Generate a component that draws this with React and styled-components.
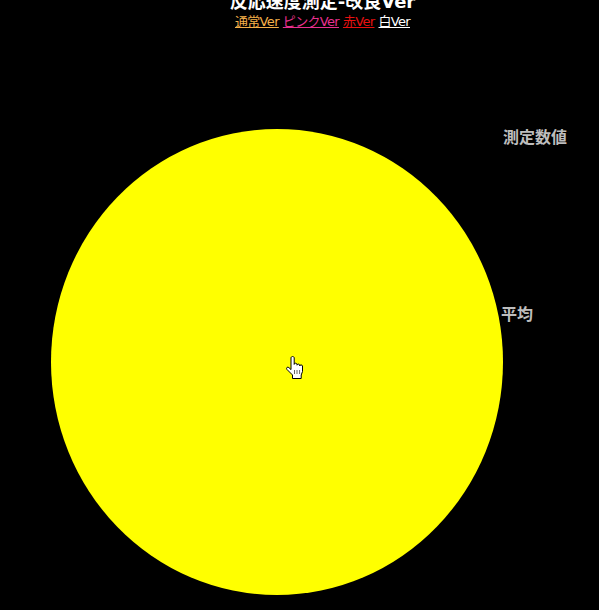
import React from "react";
import styled, { createGlobalStyle } from "styled-components";

const Global = createGlobalStyle`
  html, body { margin: 0; padding: 0; background: #000; overflow: hidden; height: 610px; }
  body { font-family: "Noto Sans CJK JP", "DejaVu Sans", sans-serif; }
`;
const Page = styled.div`
  width: 599px;
  height: 610px;
  overflow: hidden;
  display: flex;
  flex-direction: column;
`;
const Header = styled.header`
  margin-top: -10px;
  padding-left: 46px;
  display: flex;
  flex-direction: column;
  align-items: center;
`;
const Title = styled.h1`
  margin: 0;
  height: 24px;
  font: bold 18px/24px "DejaVu Sans", "Noto Sans CJK JP", sans-serif;
  color: #fff;
`;
const Links = styled.nav`
  display: flex;
  gap: 4px;
  height: 16px;
  font: 13px/16px "DejaVu Sans", "Noto Sans CJK JP", sans-serif;
  letter-spacing: -0.68px;
`;
const VerLink = styled.a`
  color: ${(p) => p.$color};
  text-decoration: underline;
`;
const Stage = styled.main`
  display: flex;
  margin-top: 99px;
  margin-left: 51px;
`;
const Circle = styled.div`
  position: relative;
  flex: none;
  width: 452px;
  height: 466px;
  border-radius: 50%;
  background: #ffff00;
`;
const HandIcon = styled.svg`
  position: absolute;
  left: 235px;
  top: 227px;
  width: 18px;
  height: 23px;
`;
const Side = styled.aside`
  display: flex;
  flex-direction: column;
  color: #bdbdbd;
  font: bold 16px/20px "Noto Sans CJK JP", sans-serif;
  white-space: nowrap;
`;
const Measure = styled.div`
  margin-top: -3px;
`;
const Average = styled.div`
  margin-top: 157px;
  margin-left: -2px;
`;

export default function App() {
  return (
    <Page>
      <Global />
      <Header>
        <Title>反応速度測定-改良Ver</Title>
        <Links>
          <VerLink href="#" $color="#f5b04a">通常Ver</VerLink>
          <VerLink href="#" $color="#e8308f">ピンクVer</VerLink>
          <VerLink href="#" $color="#e81010">赤Ver</VerLink>
          <VerLink href="#" $color="#ffffff">白Ver</VerLink>
        </Links>
      </Header>
      <Stage>
        <Circle>
          <HandIcon viewBox="0 0 18 23">
            <path
              d="M5 2c0-2 3.2-2 3.2 0v6.4c0-1.6 2.8-1.6 2.8 0v.8c0-1.5 2.6-1.5 2.6 0v.8c0-1.4 2.9-1.4 2.9 0v5.5l-1.3 3.5v3.5H6.5V19L.9 13.4c-1.1-1.5.6-3 2-1.8L5 13.6z"
              fill="#fff"
              stroke="#000"
              strokeWidth="1"
              strokeLinejoin="round"
            />
            <path d="M8.5 14v4M11 14v4M13.6 14v4" stroke="#000" strokeWidth=".6" />
          </HandIcon>
        </Circle>
        <Side>
          <Measure>測定数値</Measure>
          <Average>平均</Average>
        </Side>
      </Stage>
    </Page>
  );
}
